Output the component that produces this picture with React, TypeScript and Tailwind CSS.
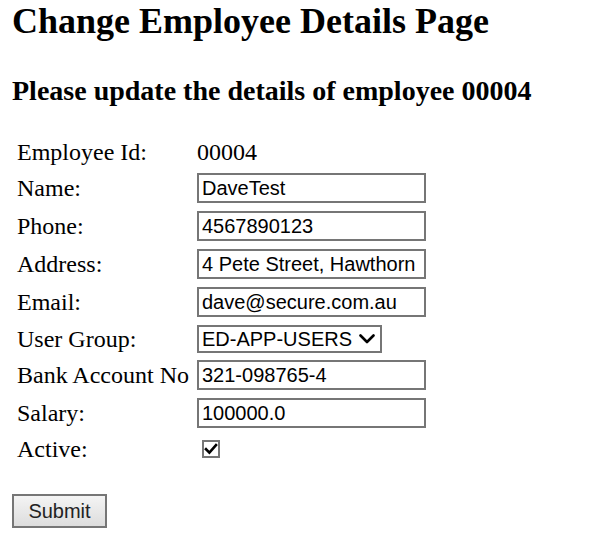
import React from 'react';

const serif = { fontFamily: '"Liberation Serif", "Times New Roman", serif' };
const sans = { fontFamily: '"Liberation Sans", Arial, sans-serif' };

type Field = { label: string; value: string };

const textFields: Field[] = [
  { label: 'Name:', value: 'DaveTest' },
  { label: 'Phone:', value: '4567890123' },
  { label: 'Address:', value: '4 Pete Street, Hawthorn' },
  { label: 'Email:', value: 'dave@secure.com.au' },
];

function TextInput({ value }: { value: string }) {
  return (
    <input
      type="text"
      defaultValue={value}
      style={sans}
      className="w-[229px] h-[30px] border-2 border-[#767676] bg-white px-[3px] text-[20px] leading-[24px] text-black outline-none"
    />
  );
}

function Row({ label, h, children }: { label: string; h: string; children: React.ReactNode }) {
  return (
    <div className={`flex items-center ${h}`}>
      <div className="w-[180px] shrink-0 text-[24px] leading-[28px] text-black">{label}</div>
      <div className="flex items-center">{children}</div>
    </div>
  );
}

export default function App() {
  return (
    <div className="min-h-[555px] bg-white pl-[12px] text-black" style={serif}>
      <h1 className="mt-[1px] text-[36px] leading-[41px] font-bold">Change Employee Details Page</h1>
      <h3 className="mt-[33px] text-[28px] leading-[32px] font-bold">
        Please update the details of employee 00004
      </h3>

      <form className="mt-[28px]" onSubmit={(e) => e.preventDefault()}>
        <div className="flex flex-col pl-[5px]">
          <div className="flex items-center h-[34px]">
            <div className="w-[180px] shrink-0 text-[24px] leading-[28px]">Employee Id:</div>
            <div className="text-[24px] leading-[28px]">00004</div>
          </div>

          {textFields.map((f) => (
            <Row key={f.label} label={f.label} h="h-[38px]">
              <TextInput value={f.value} />
            </Row>
          ))}

          <Row label="User Group:" h="h-[35px]">
            <div className="relative">
              <select
                defaultValue="ED-APP-USERS"
                style={sans}
                className="appearance-none w-[185px] h-[28px] border-2 border-[#767676] bg-white pl-[3px] text-[20px] leading-[22px] text-black outline-none"
              >
                <option>ED-APP-USERS</option>
                <option>ED-APP-ADMINS</option>
              </select>
              <svg
                className="pointer-events-none absolute right-[7px] top-[9px]"
                width="16"
                height="10"
                viewBox="0 0 16 10"
                fill="none"
              >
                <path d="M1.5 1.5 L8 8 L14.5 1.5" stroke="#000" strokeWidth="2.6" strokeLinecap="round" strokeLinejoin="round" />
              </svg>
            </div>
          </Row>

          <Row label="Bank Account No" h="h-[38px]">
            <TextInput value="321-098765-4" />
          </Row>
          <Row label="Salary:" h="h-[38px]">
            <TextInput value="100000.0" />
          </Row>

          <Row label="Active:" h="h-[34px]">
            <span className="ml-[5px] flex h-[18px] w-[18px] items-center justify-center border-2 border-[#767676] bg-white">
              <svg width="14" height="14" viewBox="0 0 14 14" fill="none">
                <path d="M2 7.2 L5.4 10.6 L12 3.2" stroke="#000" strokeWidth="2.6" strokeLinecap="square" />
              </svg>
            </span>
          </Row>
        </div>

        <button
          type="submit"
          style={sans}
          className="mt-[28px] w-[95px] h-[34px] border-2 border-[#767676] bg-gradient-to-b from-[#f4f4f4] to-[#dddddd] text-[20px] leading-[24px] text-[#222]"
        >
          Submit
        </button>
      </form>
    </div>
  );
}
